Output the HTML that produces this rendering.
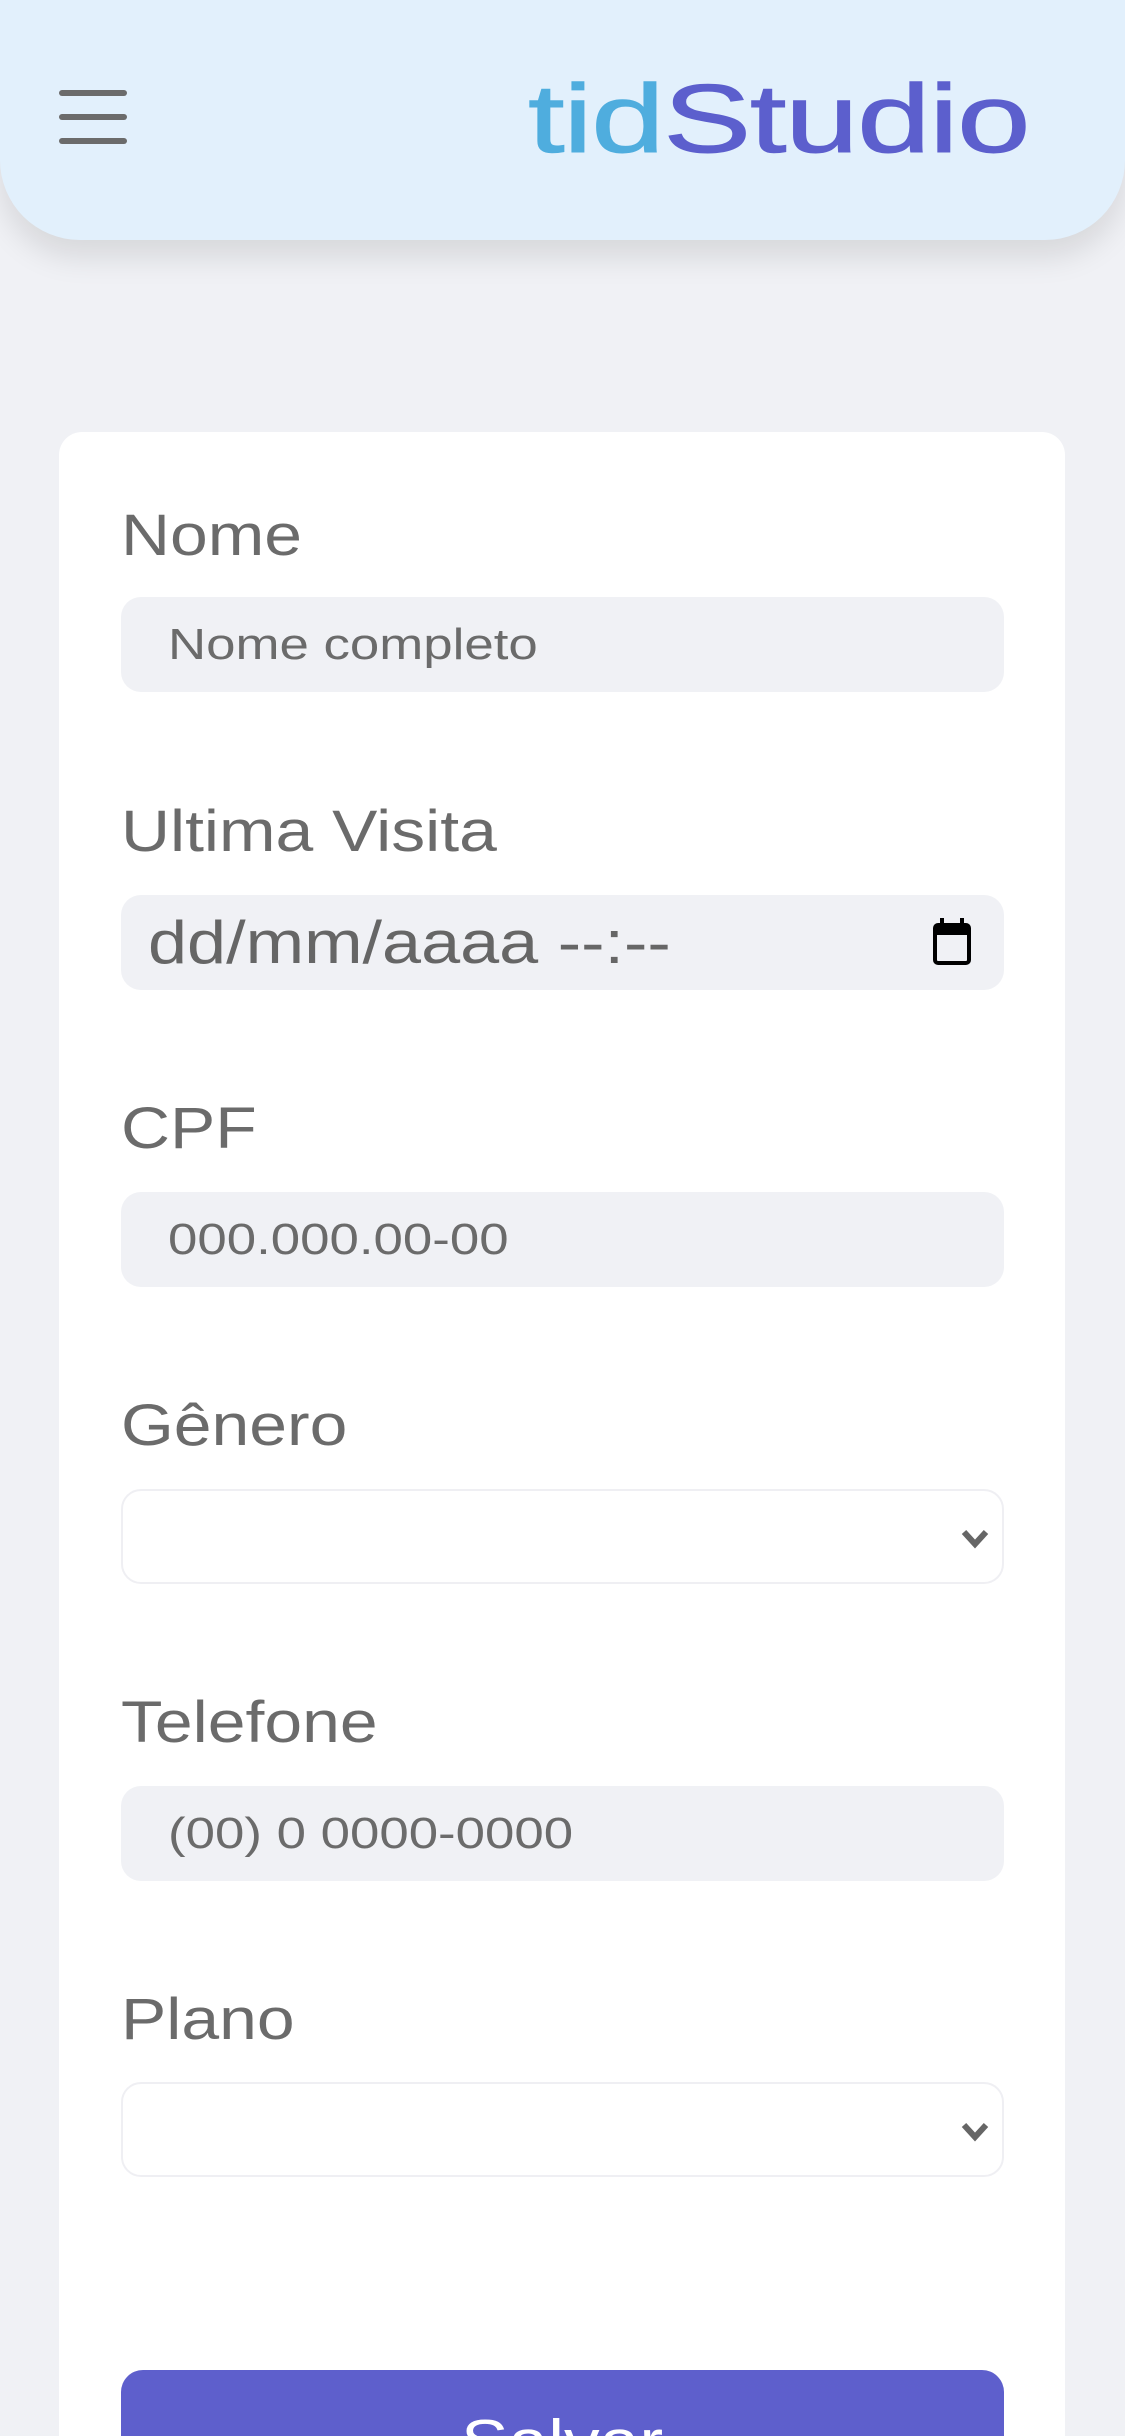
<!DOCTYPE html>
<html><head><meta charset="utf-8"><style>
*{margin:0;padding:0;box-sizing:border-box}
html,body{width:1125px;height:2436px;overflow:hidden;background:#f0f1f5;font-family:"Liberation Sans",sans-serif}
body{position:relative}
.hdr{position:absolute;left:0;top:0;width:1125px;height:240px;background:#e2f0fc;border-radius:0 0 80px 80px;box-shadow:0 18px 30px rgba(0,0,0,0.10)}
.ham{position:absolute;left:59px;width:68px;height:6px;border-radius:3px;background:#6b6b6b}
.logo{position:absolute;left:528px;top:64px;font-size:97px;line-height:110px;white-space:nowrap;transform:scaleX(1.36);transform-origin:left;-webkit-text-stroke:1px currentColor;letter-spacing:-1px}
.card{position:absolute;left:59px;top:432px;width:1006px;height:2004px;background:#fff;border-radius:23px 23px 0 0;overflow:hidden}
.lbl{position:absolute;left:121px;font-size:58px;color:#6b6b6b;transform:scaleX(1.17);transform-origin:left;white-space:nowrap;line-height:1}
.in{position:absolute;left:121px;width:883px;height:95px;background:#f0f1f5;border-radius:20px}
.ph{position:absolute;left:47px;top:26px;font-size:44px;line-height:1;color:#6b6b6b;transform:scaleX(1.2);transform-origin:left;white-space:nowrap}
.sel{position:absolute;left:121px;width:883px;height:95px;background:#fff;border:2px solid #efeff3;border-radius:20px}
.sel svg{position:absolute;right:12px;top:36px}
.btn{position:absolute;left:62px;top:1938px;width:883px;height:120px;background:#5e5fcc;border-radius:22px}
.btn span{position:absolute;left:340px;top:42px;font-size:62px;color:#fff;line-height:1;transform:scaleX(1.15);transform-origin:left}
</style></head><body>
<div class="hdr">
<div class="ham" style="top:90px"></div>
<div class="ham" style="top:114px"></div>
<div class="ham" style="top:138px"></div>
<div class="logo"><span style="color:#4fadde">tid</span><span style="color:#5c5fcd">Studio</span></div>
</div>
<div class="card"><div class="btn"><span>Salvar</span></div></div>
<div class="lbl" style="top:507px">Nome</div>
<div class="in" style="top:597px"><div class="ph">Nome completo</div></div>
<div class="lbl" style="top:803px">Ultima Visita</div>
<div class="in" style="top:895px"><div class="ph" style="left:27px;top:18px;font-size:60px;color:#666;transform:scaleX(1.17)">dd/mm/aaaa --:--</div>
<svg style="position:absolute;left:810px;top:20px" width="42" height="52" viewBox="0 0 42 52"><rect x="4" y="10" width="34" height="38" rx="3" fill="none" stroke="#000" stroke-width="4"/><rect x="4" y="10" width="34" height="10" fill="#000"/><rect x="9" y="3" width="4" height="9" fill="#000"/><rect x="29" y="3" width="4" height="9" fill="#000"/></svg></div>
<div class="lbl" style="top:1100px">CPF</div>
<div class="in" style="top:1192px"><div class="ph">000.000.00-00</div></div>
<div class="lbl" style="top:1397px">Gênero</div>
<div class="sel" style="top:1489px"><svg width="30" height="22" viewBox="0 0 30 22"><path d="M4 5 L15 17 L26 5" fill="none" stroke="#666" stroke-width="6"/></svg></div>
<div class="lbl" style="top:1694px">Telefone</div>
<div class="in" style="top:1786px"><div class="ph">(00) 0 0000-0000</div></div>
<div class="lbl" style="top:1991px">Plano</div>
<div class="sel" style="top:2082px"><svg width="30" height="22" viewBox="0 0 30 22"><path d="M4 5 L15 17 L26 5" fill="none" stroke="#666" stroke-width="6"/></svg></div>
</body></html>
